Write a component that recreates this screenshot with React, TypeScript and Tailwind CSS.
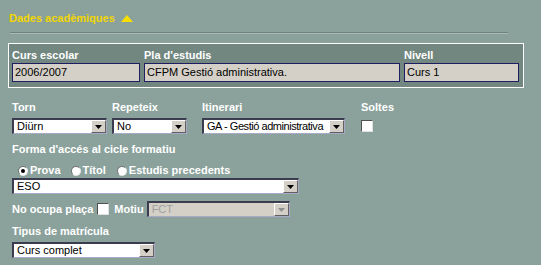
import React from "react";

// classic windows style combobox
function Combo({
  value,
  width,
  disabled = false,
  tight = false,
}: {
  value: string;
  width: string;
  disabled?: boolean;
  tight?: boolean;
}) {
  return (
    <div
      className={`${width} h-[16px] flex items-stretch border-t-2 border-l-2 border-b border-r border-t-[#3c3c50] border-l-[#3c3c50] border-b-[#a8a8c8] border-r-[#a8a8c8] ${
        disabled ? "bg-[#d4d0c8]" : "bg-white"
      }`}
    >
      <div
        className={`flex-1 min-w-0 pl-[3px] text-[11px] leading-[13px] whitespace-nowrap overflow-hidden ${
          tight ? "tracking-[-0.45px]" : ""
        } ${disabled ? "text-[#a0a0a0]" : "text-black"}`}
      >
        {value}
      </div>
      <div className="w-[15px] bg-[#d4d0c8] border-t border-l border-white border-b border-r border-b-[#606060] border-r-[#606060] flex items-center justify-center">
        <svg width="7" height="4" viewBox="0 0 7 4">
          <path d="M0 0h7L3.5 4z" fill={disabled ? "#909090" : "#000"} />
        </svg>
      </div>
    </div>
  );
}

function Check() {
  return (
    <div className="w-[12px] h-[12px] bg-white border-t border-l border-t-[#505050] border-l-[#505050] border-b border-r border-b-[#e0e0e0] border-r-[#e0e0e0]" />
  );
}

function Radio({ checked = false }: { checked?: boolean }) {
  return (
    <div className="w-[10px] h-[10px] rounded-full bg-white border border-[#707070] border-b-[#e8e8e8] border-r-[#e8e8e8] flex items-center justify-center">
      {checked && <div className="w-[4px] h-[4px] rounded-full bg-black" />}
    </div>
  );
}

const label = "text-[11px] leading-[13px] font-bold text-white";

export default function App() {
  return (
    <div
      className="w-[541px] h-[265px] bg-[#8ba29c] overflow-hidden"
      style={{ fontFamily: '"Liberation Sans", Arial, sans-serif' }}
    >
      {/* title */}
      <div className="pt-[12px] pl-[9px] flex items-center gap-[6px]">
        <span className="text-[11px] leading-[13px] font-bold text-[#f2d600]">
          Dades acadèmiques
        </span>
        <svg width="12" height="7" viewBox="0 0 12 7">
          <path d="M6 0l6 7H0z" fill="#f7e000" />
        </svg>
      </div>

      {/* separator */}
      <div className="ml-[10px] mt-[7px] w-[498px] border-t border-b border-t-[#6c837c] border-b-[#a9bab5]" />

      {/* box */}
      <div className="ml-[8px] mt-[9px] w-[516px] border border-white bg-[#71877f] px-[3px] pt-[3px] pb-[5px]">
        <div className="flex gap-[4px]">
          <div className="w-[128px]">
            <div className={`${label} h-[16px] pt-[2px]`}>Curs escolar</div>
            <div className="h-[19px] border border-[#1e1e60] bg-[#d4d0c8] text-[11px] leading-[17px] pl-[2px] text-black">
              2006/2007
            </div>
          </div>
          <div className="w-[256px]">
            <div className={`${label} h-[16px] pt-[2px]`}>Pla d'estudis</div>
            <div className="h-[19px] border border-[#1e1e60] bg-[#d4d0c8] text-[11px] leading-[17px] pl-[2px] text-black">
              CFPM Gestió administrativa.
            </div>
          </div>
          <div className="w-[115px]">
            <div className={`${label} h-[16px] pt-[2px]`}>Nivell</div>
            <div className="h-[19px] border border-[#1e1e60] bg-[#d4d0c8] text-[11px] leading-[17px] pl-[2px] text-black">
              Curs 1
            </div>
          </div>
        </div>
      </div>

      {/* form */}
      <div className="pl-[12px] pt-[13px]">
        <div className="flex">
          <div className="w-[100px]">
            <div className={`${label} mb-[4px]`}>Torn</div>
            <Combo value="Diürn" width="w-[95px]" />
          </div>
          <div className="w-[90px]">
            <div className={`${label} mb-[4px]`}>Repeteix</div>
            <Combo value="No" width="w-[75px]" />
          </div>
          <div className="w-[159px]">
            <div className={`${label} mb-[4px]`}>Itinerari</div>
            <Combo value="GA - Gestió administrativa" width="w-[143px]" tight />
          </div>
          <div>
            <div className={`${label} mb-[6px]`}>Soltes</div>
            <Check />
          </div>
        </div>

        <div className={`${label} mt-[9px]`}>Forma d'accés al cicle formatiu</div>

        <div className="flex items-center mt-[8px] pl-[6px] gap-[2px]">
          <Radio checked />
          <span className={`${label} mr-[8px]`}>Prova</span>
          <Radio />
          <span className={`${label} mr-[9px]`}>Títol</span>
          <Radio />
          <span className={label}>Estudis precedents</span>
        </div>

        <div className="mt-[1px]">
          <Combo value="ESO" width="w-[287px]" />
        </div>

        <div className="flex items-center mt-[7px]">
          <span className={`${label} mr-[4px]`}>No ocupa plaça</span>
          <Check />
          <span className={`${label} ml-[5px] mr-[3px]`}>Motiu</span>
          <Combo value="FCT" width="w-[143px]" disabled />
        </div>

        <div className={`${label} mt-[8px]`}>Tipus de matrícula</div>

        <div className="mt-[4px]">
          <Combo value="Curs complet" width="w-[143px]" />
        </div>
      </div>
    </div>
  );
}
